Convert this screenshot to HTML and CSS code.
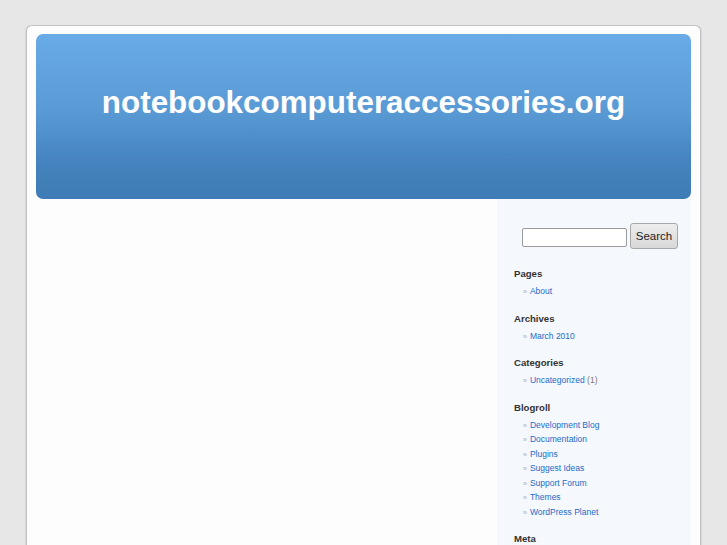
FILE: index.html
```html
<!DOCTYPE html>
<html>
<head>
<meta charset="utf-8">
<title>notebookcomputeraccessories.org</title>
<link rel="stylesheet" href="styles.css">
</head>
<body>
<div class="page">
  <header class="header">
    <h1 class="title">notebookcomputeraccessories.org</h1>
  </header>
  <div class="content">
    <main class="main"></main>
    <aside class="sidebar">
      <form class="search">
        <input class="search-input" type="text">
        <button class="search-btn" type="button">Search</button>
      </form>
      <section class="widget">
        <h2 class="widget-title">Pages</h2>
        <ul class="list">
          <li><a href="#">About</a></li>
        </ul>
      </section>
      <section class="widget">
        <h2 class="widget-title">Archives</h2>
        <ul class="list">
          <li><a href="#">March 2010</a></li>
        </ul>
      </section>
      <section class="widget">
        <h2 class="widget-title">Categories</h2>
        <ul class="list">
          <li><a href="#">Uncategorized</a> <span class="count">(1)</span></li>
        </ul>
      </section>
      <section class="widget">
        <h2 class="widget-title">Blogroll</h2>
        <ul class="list">
          <li><a href="#">Development Blog</a></li>
          <li><a href="#">Documentation</a></li>
          <li><a href="#">Plugins</a></li>
          <li><a href="#">Suggest Ideas</a></li>
          <li><a href="#">Support Forum</a></li>
          <li><a href="#">Themes</a></li>
          <li><a href="#">WordPress Planet</a></li>
        </ul>
      </section>
      <section class="widget">
        <h2 class="widget-title">Meta</h2>
      </section>
    </aside>
  </div>
</div>
</body>
</html>
```
FILE: styles.css
```css
html, body {
  margin: 0;
  padding: 0;
}
body {
  background: #e7e7e7;
  font-family: "Liberation Sans", Arial, sans-serif;
  overflow: hidden;
}
.page {
  margin: 25px auto 0;
  background: #fdfdfd;
  border: 1px solid #c2c2c2;
  border-bottom: none;
  border-radius: 6px 6px 0 0;
  box-shadow: 1px 0 0 #d8d8d8, -1px 0 0 #d8d8d8;
  padding: 8px 9px 0 9px;
  box-sizing: content-box;
  width: 655px;
}
.header {
  height: 165px;
  border-radius: 7px;
  background: linear-gradient(to bottom, #69abe6 0%, #5a9bd6 45%, #4382bc 80%, #3f7cb5 100%);
  box-sizing: border-box;
  padding-top: 51px;
}
.title {
  margin: 0;
  text-align: center;
  color: #fff;
  font-size: 31.4px;
  line-height: 36px;
  font-weight: bold;
}
.content {
  display: flex;
  min-height: 400px;
}
.main {
  flex: 1;
}
.sidebar {
  width: 194px;
  background: #f5f8fc;
  padding: 24px 0 0 0;
  box-sizing: border-box;
}
.search {
  display: flex;
  align-items: center;
  margin: 0 0 0 25px;
  gap: 3px;
  height: 26px;
}
.search-input {
  width: 105px;
  height: 19px;
  box-sizing: border-box;
  border: 1px solid #9a9a9a;
  border-radius: 2px;
  background: #fff;
  margin: 2px 0 0 0;
  padding: 0;
}
.search-btn {
  width: 48px;
  height: 26px;
  box-sizing: border-box;
  border: 1px solid #a8a8a8;
  border-radius: 3px;
  background: linear-gradient(to bottom, #ededed, #d8d8d8);
  font-family: "Liberation Sans", Arial, sans-serif;
  font-size: 11.5px;
  color: #222;
  padding: 0;
}
.widget {
  margin: 0;
}
.widget:first-of-type {
  margin-top: 19px;
}
.widget-title {
  margin: 0 0 4px 17px;
  font-size: 9.6px;
  line-height: 12px;
  font-weight: bold;
  color: #333;
}
.list {
  list-style: none;
  margin: 0 0 14px 0;
  padding: 0 0 0 26px;
}
.list li {
  font-size: 8.5px;
  line-height: 14.5px;
  height: 14.5px;
  color: #777;
}
.list li::before {
  content: "\00BB";
  color: #aaa;
  font-size: 7px;
  line-height: 0;
  margin-right: 3px;
}
.list a {
  color: #1b6cc9;
  text-decoration: none;
}
.count {
  color: #777;
}
```
